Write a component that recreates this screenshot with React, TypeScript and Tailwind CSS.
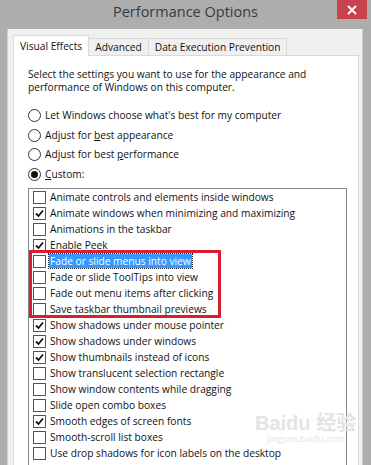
import React from "react";

const items: { label: string; checked: boolean; selected?: boolean }[] = [
  { label: "Animate controls and elements inside windows", checked: false },
  { label: "Animate windows when minimizing and maximizing", checked: true },
  { label: "Animations in the taskbar", checked: false },
  { label: "Enable Peek", checked: true },
  { label: "Fade or slide menus into view", checked: false, selected: true },
  { label: "Fade or slide ToolTips into view", checked: false },
  { label: "Fade out menu items after clicking", checked: false },
  { label: "Save taskbar thumbnail previews", checked: false },
  { label: "Show shadows under mouse pointer", checked: true },
  { label: "Show shadows under windows", checked: true },
  { label: "Show thumbnails instead of icons", checked: true },
  { label: "Show translucent selection rectangle", checked: false },
  { label: "Show window contents while dragging", checked: false },
  { label: "Slide open combo boxes", checked: false },
  { label: "Smooth edges of screen fonts", checked: true },
  { label: "Smooth-scroll list boxes", checked: false },
  { label: "Use drop shadows for icon labels on the desktop", checked: false },
];

function Radio({ on, children }: { on?: boolean; children: React.ReactNode }) {
  return (
    <div className="flex items-center h-[19.6px]">
      <div className="w-[13px] h-[13px] rounded-full border border-[#333] bg-white flex items-center justify-center shrink-0">
        {on && <div className="w-[7px] h-[7px] rounded-full bg-[#111]" />}
      </div>
      <span className="ml-[4px]">{children}</span>
    </div>
  );
}

function Check({ on }: { on: boolean }) {
  return (
    <div className="w-[13px] h-[13px] border border-[#555] bg-white flex items-center justify-center shrink-0">
      {on && (
        <svg width="9" height="9" viewBox="0 0 9 9">
          <path d="M1 4.5 L3.5 7 L8 1.5" stroke="#111" strokeWidth="1.8" fill="none" />
        </svg>
      )}
    </div>
  );
}

export default function App() {
  return (
    <div
      className="w-[371px] h-[465px] bg-[#adadad] flex flex-col overflow-hidden relative text-[#111]"
      style={{ fontFamily: '"Open Sans", "Noto Sans", sans-serif' }}
    >
      {/* title bar */}
      <div className="h-[29px] shrink-0 relative flex items-center justify-center">
        <span className="text-[14.5px] leading-none text-[#3a3a3a] mt-[-5px]">Performance Options</span>
        <div className="absolute right-[4px] top-0 w-[30px] h-[19px] bg-[#c7424a] flex items-center justify-center">
          <svg width="10" height="10" viewBox="0 0 10 10">
            <path d="M1 1 L9 9 M9 1 L1 9" stroke="#fff" strokeWidth="2" />
          </svg>
        </div>
      </div>
      {/* body */}
      <div className="flex-1 ml-[7px] mr-[8px] bg-[#f0f0f0] border-l border-r border-[#cfcfcf] flex flex-col pl-[5px] pt-[6px] pr-[3px]">
        {/* tabs */}
        <div className="flex items-end h-[20px] relative z-10 text-[10.2px] leading-none">
          <div className="h-[21px] bg-white border border-b-0 border-[#d9d9d9] px-[6px] flex items-center mb-[-1px]">
            Visual Effects
          </div>
          <div className="h-[17px] bg-[#f0f0f0] border border-l-0 border-b-0 border-[#d9d9d9] px-[6px] flex items-center">
            Advanced
          </div>
          <div className="h-[17px] bg-[#f0f0f0] border border-l-0 border-b-0 border-[#d9d9d9] px-[6px] flex items-center">
            Data Execution Prevention
          </div>
        </div>
        {/* panel */}
        <div className="flex-1 bg-white border border-b-0 border-[#d9d9d9] pl-[14px] pr-[10px] pt-[12px] text-[10.2px] flex flex-col">
          <p className="leading-[13px]">
            Select the settings you want to use for the appearance and
            <br />
            performance of Windows on this computer.
          </p>
          <div className="mt-[12px] flex flex-col leading-[13px]">
            <Radio>
              Let Windows choose what's best for my computer
            </Radio>
            <Radio>
              Adjust for <span className="underline">b</span>est appearance
            </Radio>
            <Radio>
              Adjust for best <span className="underline">p</span>erformance
            </Radio>
            <Radio on>
              <span className="underline">C</span>ustom:
            </Radio>
          </div>
          <div className="mt-[4px] mr-[1px] flex-1 border border-b-0 border-[#828790] pl-[4px] flex flex-col leading-[13px]">
            {items.map((it) => (
              <div key={it.label} className="h-[16px] flex items-center shrink-0">
                <Check on={it.checked} />
                <span
                  className={
                    "ml-[3px] px-[1px] h-[14px] flex items-center " +
                    (it.selected ? "bg-[#3399ff] text-white outline-1 outline-dotted outline-[#222]" : "")
                  }
                >
                  {it.label}
                </span>
              </div>
            ))}
          </div>
        </div>
      </div>
      {/* red annotation */}
      <div className="absolute left-[29px] top-[250px] w-[192px] h-[68px] border-[3px] border-[#d8202c]" />
      {/* watermark */}
      <div className="absolute left-[255px] top-[412px] flex flex-col items-center text-[#e4e4e4] pointer-events-none">
        <span className="text-[20px] font-bold leading-none" style={{ fontFamily: '"Liberation Sans", sans-serif' }}>
          Baidu <span style={{ fontFamily: '"Noto Sans CJK SC", sans-serif' }}>经验</span>
        </span>
        <span className="text-[9px] leading-none mt-[1px]">jingyan.baidu.com</span>
      </div>
    </div>
  );
}
